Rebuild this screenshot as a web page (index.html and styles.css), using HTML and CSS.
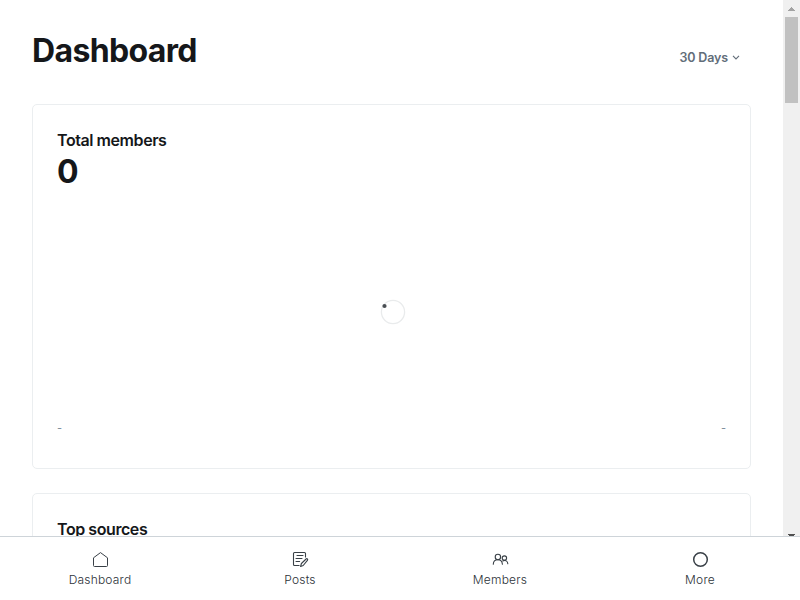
FILE: index.html
```html
<!DOCTYPE html>
<html lang="en">
<head>
<meta charset="utf-8">
<title>Dashboard</title>
<link rel="stylesheet" href="styles.css">
</head>
<body>
<div class="app">
  <div class="viewport">
    <main class="content">
      <header class="header">
        <h1 class="title">Dashboard</h1>
        <button class="period" type="button"><span>30 Days</span>
          <svg width="8" height="6" viewBox="0 0 8 6" fill="none" stroke="currentColor" stroke-width="1.1"><path d="M1 .8 4 3.9 7 .8"/></svg>
        </button>
      </header>
      <section class="card card-members">
        <h2 class="card-title">Total members</h2>
        <div class="value">0</div>
        <div class="chart">
          <svg class="spinner" width="26" height="26" viewBox="0 0 26 26"><circle cx="13" cy="13" r="11.6" fill="none" stroke="#e9ebec" stroke-width="1.3"/><circle cx="4.5" cy="7" r="2.1" fill="#494e53"/></svg>
        </div>
        <div class="dates"><span>-</span><span>-</span></div>
      </section>
      <section class="card card-sources">
        <h2 class="card-title">Top sources</h2>
      </section>
    </main>
    <div class="scrollbar">
      <svg class="arrow" width="17" height="17" viewBox="0 0 17 17" shape-rendering="crispEdges"><path d="M8 7h1v1h1v1h1v1h1v1H5v-1h1V9h1V8h1z" fill="#a3a3a3"/></svg>
      <div class="thumb"></div>
      <svg class="arrow arrow-down" width="17" height="3" viewBox="0 0 17 3" shape-rendering="crispEdges"><path d="M5 1h7v1h-1v1H6V2H5z" fill="#505050"/></svg>
    </div>
  </div>
  <nav class="nav">
    <a class="nav-item">
      <svg width="18" height="18" viewBox="0 0 18 18" fill="none" stroke="#394047" stroke-width="1" stroke-linejoin="round"><path d="M2.5 7.8 9.5 2.6l7 5.2v7.7a1 1 0 0 1-1 1h-12a1 1 0 0 1-1-1z"/></svg>
      <span>Dashboard</span>
    </a>
    <a class="nav-item">
      <svg width="18" height="18" viewBox="0 0 18 18" fill="none" stroke="#394047" stroke-width="1.1" stroke-linecap="round" stroke-linejoin="round"><path d="M14.5 7V3.5a1 1 0 0 0-1-1h-10a1 1 0 0 0-1 1v11a1 1 0 0 0 1 1h4.6M6 5.5h6M5 8.5h6M5 11.5h3.6M9.6 16.5l.8-3 4.7-4.5c.9-.8 2.1.3 1.3 1.3l-4.2 5.2z"/></svg>
      <span>Posts</span>
    </a>
    <a class="nav-item">
      <svg width="18" height="18" viewBox="0 0 18 18" fill="none" stroke="#394047" stroke-width="1.1" stroke-linecap="round" stroke-linejoin="round"><circle cx="6.9" cy="7" r="2.7"/><path d="M2.3 14.3c0-2.7 1.9-4.6 4.6-4.6 2.5 0 4.3 1.9 4.5 4.6"/><circle cx="13.4" cy="8.1" r="2.2"/><path d="M11.7 10.9c2.8-1.3 5.1.3 5.1 2.9"/></svg>
      <span>Members</span>
    </a>
    <a class="nav-item">
      <svg width="18" height="18" viewBox="0 0 18 18" fill="none" stroke="#394047" stroke-width="1.5"><circle cx="9.5" cy="9.5" r="6.8"/></svg>
      <span>More</span>
    </a>
  </nav>
</div>
</body>
</html>
```
FILE: styles.css
```css
* { box-sizing: border-box; }
body {
  margin: 0;
  background: #fff;
  color: #15171a;
  font-family: Inter, "Liberation Sans", sans-serif;
}
h1, h2 { margin: 0; }
.app {
  display: flex;
  flex-direction: column;
  width: 800px;
  height: 600px;
  overflow: hidden;
}
.viewport {
  display: flex;
  height: 536px;
  overflow: hidden;
}
.content {
  display: flex;
  flex-direction: column;
  flex: 1;
  padding: 0 32px;
}
.header {
  display: flex;
  flex: none;
  justify-content: space-between;
  height: 104px;
}
.title {
  margin-top: 29px;
  font-size: 32px;
  line-height: 43px;
  font-weight: 700;
  letter-spacing: -0.64px;
}
.period {
  display: flex;
  align-items: center;
  gap: 4px;
  height: 20px;
  margin: 48px 11px 0 0;
  padding: 0;
  border: 0;
  background: none;
  color: #626d79;
  font: 600 12.5px/20px Inter, sans-serif;
  letter-spacing: -0.15px;
}
.card {
  flex: none;
  border: 1px solid #ebeef0;
  border-radius: 5px;
  padding: 25px 24px 0;
}
.card-members {
  display: flex;
  flex-direction: column;
  height: 365px;
}
.card-title {
  font-size: 16px;
  line-height: 21px;
  font-weight: 600;
  letter-spacing: -0.43px;
}
.value {
  height: 40px;
  font-size: 32px;
  line-height: 41px;
  font-weight: 700;
}
.chart {
  display: flex;
  justify-content: center;
  align-items: center;
  height: 241px;
  padding: 1px 0 0 2px;
}
.dates {
  display: flex;
  justify-content: space-between;
  margin-top: -12px;
  color: #7c8b9a;
  font-size: 11px;
  line-height: 16px;
}
.card-sources { height: 365px; margin-top: 24px; }
.scrollbar {
  display: flex;
  flex-direction: column;
  align-items: center;
  width: 17px;
  background: #f0f0f0;
}
.thumb {
  width: 13px;
  height: 86px;
  background: #c1c1c1;
}
.arrow { flex: none; }
.arrow-down { margin-top: auto; }
.nav {
  display: flex;
  height: 64px;
  border-top: 1px solid #ced4d9;
}
.nav-item {
  display: flex;
  flex: 1;
  flex-direction: column;
  align-items: center;
  padding-top: 13px;
  color: #2c3238;
  font-size: 12px;
  font-weight: 300;
  line-height: 16px;
  letter-spacing: 0.2px;
}
.nav-item span { margin-top: 4px; }
```
